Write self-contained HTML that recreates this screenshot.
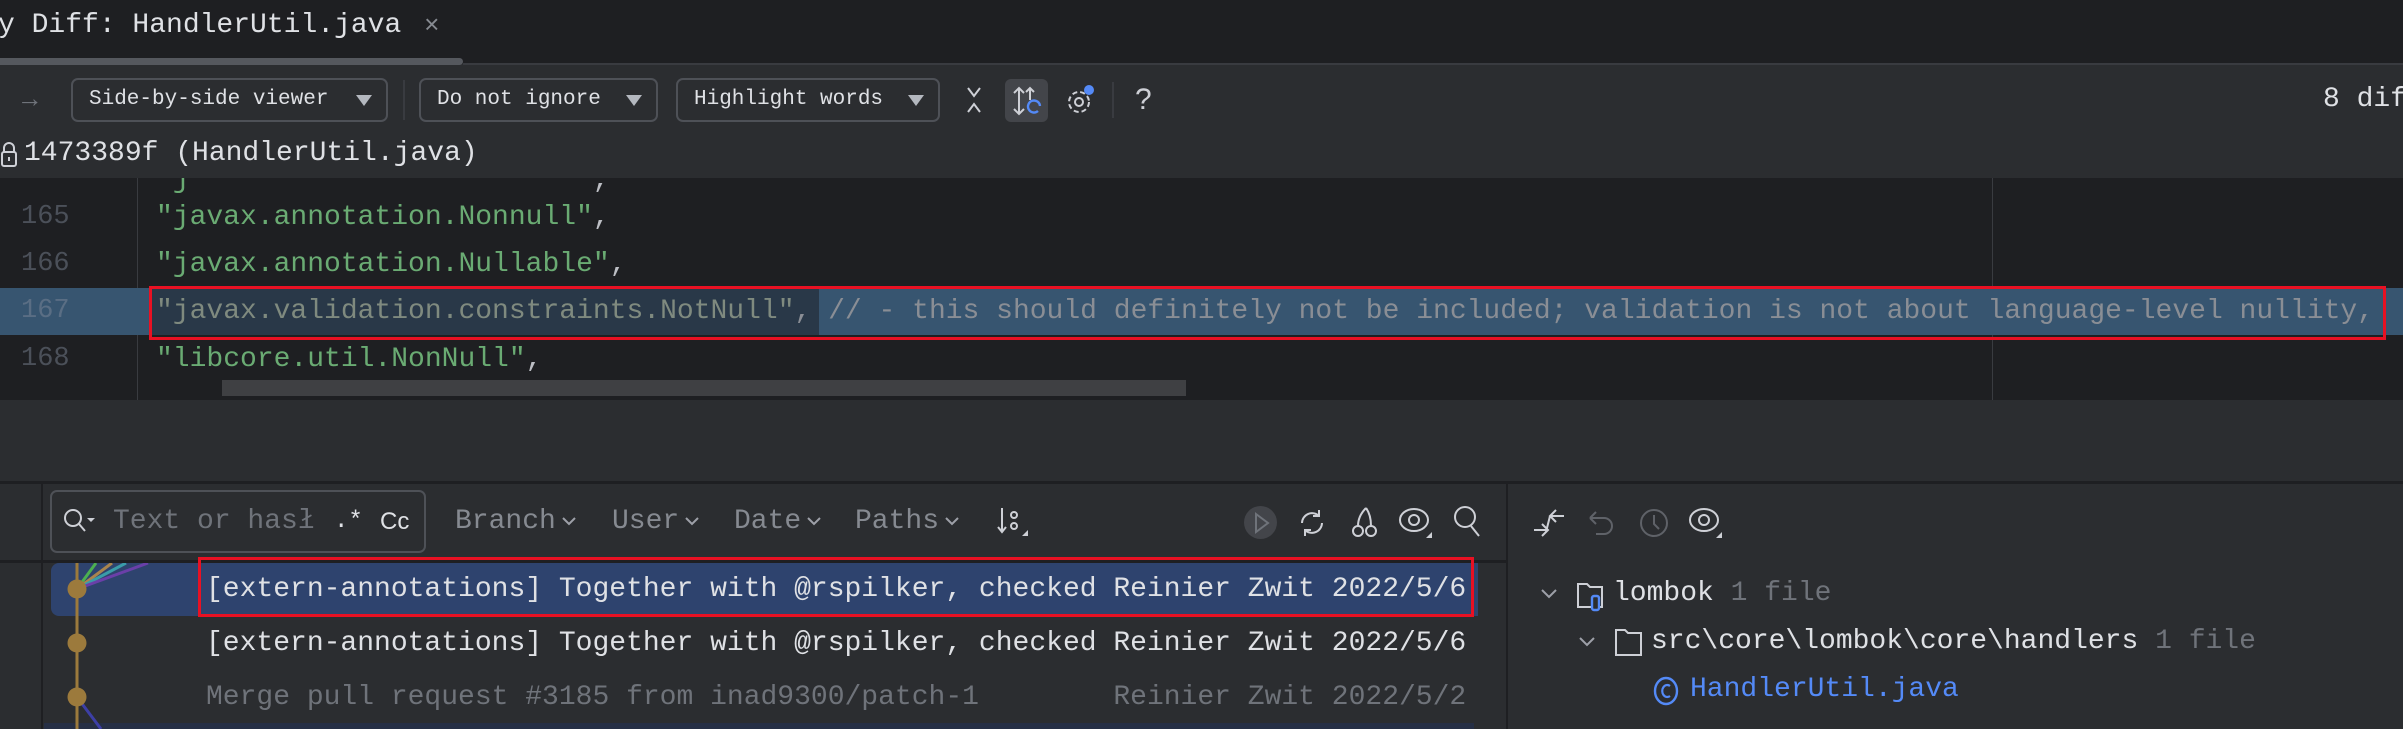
<!DOCTYPE html>
<html><head><meta charset="utf-8"><style>
*{margin:0;padding:0;box-sizing:border-box}
body{width:2403px;height:729px;overflow:hidden;background:#2b2d30;position:relative;font-family:"Liberation Mono",monospace;color:#dfe1e5}
.a{position:absolute;white-space:pre}
.dd{position:absolute;top:78px;height:44px;border:2px solid #4e5157;border-radius:7px;font-size:21px;line-height:40px;padding-left:16px;color:#dfe1e5}
.dd:after{content:"";position:absolute;right:14px;top:15px;border-left:8px solid transparent;border-right:8px solid transparent;border-top:11px solid #b4b8bf}
.code{font-size:28px;line-height:47px;color:#6aab73}
.ln{font-size:27px;color:#4b5059;line-height:47px}
.f{font-size:28px;color:#868a91;line-height:40px;top:502px}
.cv{display:inline-block;vertical-align:middle;margin-left:6px}
</style></head><body>
<!-- title bar -->
<div class="a" style="left:0;top:0;width:2403px;height:64px;background:#1e1f22"></div>
<div class="a" style="left:-2px;top:6px;font-size:28px;line-height:40px;color:#dfe1e5">y Diff: HandlerUtil.java</div>
<div class="a" style="left:424px;top:6px;font-size:26px;line-height:40px;color:#868a91">×</div>
<div class="a" style="left:0;top:58px;width:463px;height:7px;background:#55585e;border-radius:0 4px 4px 0"></div>
<div class="a" style="left:463px;top:63px;width:1940px;height:2px;background:#393b40"></div>
<!-- toolbar -->
<div class="a" style="left:22px;top:80px;font-size:26px;color:#6f737a;line-height:40px">→</div>
<div class="dd" style="left:71px;width:317px">Side-by-side viewer</div>
<div class="a" style="left:403px;top:80px;width:2px;height:40px;background:#393b40"></div>
<div class="dd" style="left:419px;width:239px">Do not ignore</div>
<div class="dd" style="left:676px;width:264px">Highlight words</div>
<svg class="a" style="left:962px;top:84px" width="24" height="32" viewBox="0 0 24 32"><path d="M6 4l6 8 6-8M6 28l6-8 6 8" stroke="#ced0d6" stroke-width="2" fill="none"/></svg>
<div class="a" style="left:1005px;top:79px;width:43px;height:43px;background:#43454a;border-radius:6px"></div>
<svg class="a" style="left:1010px;top:84px" width="34" height="34" viewBox="0 0 34 34"><path d="M9 4v26M4 9l5-5 5 5M4 25l5 5 5-5" stroke="#ced0d6" stroke-width="2" fill="none"/><path d="M20 4v12M16 8l4-4 4 4" stroke="#ced0d6" stroke-width="2" fill="none"/><path d="M30 22a6 6 0 1 0-2 5" stroke="#548af7" stroke-width="2.4" fill="none"/></svg>
<svg class="a" style="left:1065px;top:84px" width="32" height="34" viewBox="0 0 32 34"><circle cx="14" cy="18" r="10" stroke="#ced0d6" stroke-width="2" fill="none" stroke-dasharray="5 3"/><circle cx="14" cy="18" r="4" stroke="#ced0d6" stroke-width="2" fill="none"/><circle cx="24" cy="6" r="5" fill="#548af7"/></svg>
<div class="a" style="left:1112px;top:82px;width:2px;height:36px;background:#393b40"></div>
<div class="a" style="left:1135px;top:78px;font-size:30px;line-height:44px;color:#ced0d6;font-family:'Liberation Sans',sans-serif">?</div>
<div class="a" style="left:2323px;top:80px;font-size:28px;line-height:40px;color:#dfe1e5">8 dif</div>
<svg class="a" style="left:0;top:140px" width="20" height="28" viewBox="0 0 20 28"><rect x="2" y="12" width="14" height="14" rx="2" stroke="#ced0d6" stroke-width="2" fill="none"/><path d="M4 12V8a5 5 0 0 1 10 0v4M9 17v4" stroke="#ced0d6" stroke-width="2" fill="none"/></svg>
<div class="a" style="left:24px;top:134px;font-size:28px;line-height:40px;color:#dfe1e5">1473389f (HandlerUtil.java)</div>
<!-- code -->
<div class="a" style="left:0;top:178px;width:2403px;height:222px;background:#1e1f22"></div>
<div class="a" style="left:137px;top:178px;width:1px;height:222px;background:#393b40"></div>
<div class="a" style="left:1992px;top:178px;width:1px;height:222px;background:#393b40"></div>
<div class="a" style="left:0;top:288px;width:2403px;height:47px;background:#375570"></div>
<div class="a" style="left:149px;top:288px;width:670px;height:47px;background:#293848"></div>
<div class="a ln" style="left:21px;top:194px">165</div>
<div class="a ln" style="left:21px;top:241px">166</div>
<div class="a ln" style="left:21px;top:288px;color:#5a6e84">167</div>
<div class="a ln" style="left:21px;top:336px">168</div>
<div class="a code" style="left:156px;top:157px;color:#6aab73;clip-path:inset(21px 0 0 0)">"j                        <span style="color:#bcbec4">,</span></div>
<div class="a code" style="left:156px;top:194px">"javax.annotation.Nonnull"<span style="color:#bcbec4">,</span></div>
<div class="a code" style="left:156px;top:241px">"javax.annotation.Nullable"<span style="color:#bcbec4">,</span></div>
<div class="a code" style="left:156px;top:288px;color:#7f8a7f">"javax.validation.constraints.NotNull"<span style="color:#8a8e95">, // - this should definitely not be included; validation is not about language-level nullity,</span></div>
<div class="a code" style="left:156px;top:336px">"libcore.util.NonNull"<span style="color:#bcbec4">,</span></div>
<div class="a" style="left:149px;top:286px;width:2237px;height:54px;border:3px solid #e81123"></div>
<div class="a" style="left:222px;top:380px;width:964px;height:16px;background:#3f4043"></div>
<!-- bottom -->
<div class="a" style="left:0;top:481px;width:2403px;height:3px;background:#1e1f22"></div>
<div class="a" style="left:0;top:560px;width:1507px;height:3px;background:#1e1f22"></div>
<div class="a" style="left:41px;top:484px;width:2px;height:245px;background:#1e1f22"></div>
<div class="a" style="left:1506px;top:484px;width:2px;height:245px;background:#1e1f22"></div>
<div class="a" style="left:50px;top:490px;width:376px;height:63px;border:2px solid #4e5157;border-radius:7px"></div>
<svg class="a" style="left:62px;top:507px" width="36" height="30" viewBox="0 0 36 30"><circle cx="11" cy="11" r="8" stroke="#ced0d6" stroke-width="2" fill="none"/><path d="M17 17l6 7" stroke="#ced0d6" stroke-width="2"/><path d="M25 11l4 4 4-4z" fill="#ced0d6"/></svg>
<div class="a f" style="left:113px;color:#6f737a">Text or hasł</div>
<div class="a f" style="left:334px;color:#dfe1e5;font-size:24px">.*</div>
<div class="a f" style="left:380px;color:#dfe1e5;font-size:24px;font-family:'Liberation Sans',sans-serif">Cc</div>
<div class="a f" style="left:455px">Branch<svg class="cv" width="14" height="10" viewBox="0 0 14 10"><path d="M1 2l6 6 6-6" stroke="#9da0a8" stroke-width="2" fill="none"/></svg></div>
<div class="a f" style="left:612px">User<svg class="cv" width="14" height="10" viewBox="0 0 14 10"><path d="M1 2l6 6 6-6" stroke="#9da0a8" stroke-width="2" fill="none"/></svg></div>
<div class="a f" style="left:734px">Date<svg class="cv" width="14" height="10" viewBox="0 0 14 10"><path d="M1 2l6 6 6-6" stroke="#9da0a8" stroke-width="2" fill="none"/></svg></div>
<div class="a f" style="left:855px">Paths<svg class="cv" width="14" height="10" viewBox="0 0 14 10"><path d="M1 2l6 6 6-6" stroke="#9da0a8" stroke-width="2" fill="none"/></svg></div>
<svg class="a" style="left:996px;top:506px" width="36" height="32" viewBox="0 0 36 32"><path d="M6 2v24M2 21l4 5 4-5" stroke="#ced0d6" stroke-width="2" fill="none"/><circle cx="18" cy="9" r="3" stroke="#ced0d6" stroke-width="2" fill="none"/><circle cx="18" cy="20" r="3" stroke="#ced0d6" stroke-width="2" fill="none"/><path d="M26 30h6v-6z" fill="#ced0d6"/></svg>
<div class="a" style="left:1244px;top:506px;width:33px;height:33px;border-radius:50%;background:#43454a"></div>
<svg class="a" style="left:1250px;top:511px" width="22" height="24" viewBox="0 0 22 24"><path d="M6 3l12 9-12 9z" stroke="#6f737a" stroke-width="2" fill="none"/></svg>
<svg class="a" style="left:1296px;top:506px" width="32" height="34" viewBox="0 0 32 34"><path d="M6 17a10 10 0 0 1 17-7M26 17a10 10 0 0 1-17 7M23 4v6h-6M9 30v-6h6" stroke="#ced0d6" stroke-width="2" fill="none"/></svg>
<svg class="a" style="left:1350px;top:504px" width="30" height="36" viewBox="0 0 30 36"><circle cx="8" cy="27" r="5" stroke="#ced0d6" stroke-width="2" fill="none"/><circle cx="21" cy="27" r="5" stroke="#ced0d6" stroke-width="2" fill="none"/><path d="M8 22c0-8 4-14 8-18M21 22c0-8-2-14-5-18" stroke="#ced0d6" stroke-width="2" fill="none"/></svg>
<svg class="a" style="left:1398px;top:504px" width="36" height="36" viewBox="0 0 36 36"><ellipse cx="16" cy="16" rx="14" ry="11" stroke="#ced0d6" stroke-width="2" fill="none"/><circle cx="16" cy="16" r="5" stroke="#ced0d6" stroke-width="2" fill="none"/><path d="M28 34h6v-6z" fill="#ced0d6"/></svg>
<svg class="a" style="left:1452px;top:504px" width="30" height="36" viewBox="0 0 30 36"><circle cx="13" cy="13" r="10" stroke="#ced0d6" stroke-width="2" fill="none"/><path d="M19 22l8 10" stroke="#ced0d6" stroke-width="2"/></svg>
<!-- rows -->
<div class="a" style="left:51px;top:563px;width:1427px;height:53px;background:#2e436e;border-radius:8px 0 0 8px"></div>
<div class="a" style="left:44px;top:723px;width:1430px;height:6px;background:#262f45"></div>
<svg class="a" style="left:44px;top:563px" width="120" height="166" viewBox="0 0 120 166"><path d="M33 0v166" stroke="#9c7a3c" stroke-width="3"/><path d="M33 26L52 0" stroke="#4caf50" stroke-width="3"/><path d="M33 26L68 0" stroke="#a9844e" stroke-width="3"/><path d="M33 26L82 0" stroke="#3a9ca8" stroke-width="3"/><path d="M33 26L104 0" stroke="#6a3fa8" stroke-width="3"/><path d="M33 134L57 166" stroke="#3d3fa6" stroke-width="3"/><circle cx="33" cy="26" r="9.5" fill="#9c7a3c"/><circle cx="33" cy="80" r="9.5" fill="#9c7a3c"/><circle cx="33" cy="134" r="9.5" fill="#9c7a3c"/></svg>
<div class="a" style="left:206px;top:570px;font-size:28px;line-height:40px;color:#dfe1e5">[extern-annotations] Together with @rspilker, checked Reinier Zwit 2022/5/6</div>
<div class="a" style="left:206px;top:624px;font-size:28px;line-height:40px;color:#dfe1e5">[extern-annotations] Together with @rspilker, checked Reinier Zwit 2022/5/6</div>
<div class="a" style="left:206px;top:678px;font-size:28px;line-height:40px;color:#6f737a">Merge pull request #3185 from inad9300/patch-1        Reinier Zwit 2022/5/2</div>
<div class="a" style="left:198px;top:557px;width:1276px;height:60px;border:3px solid #e81123"></div>
<!-- right panel -->
<svg class="a" style="left:1532px;top:506px" width="34" height="34" viewBox="0 0 34 34"><path d="M2 24h14M10 18l6 6-6 6M32 10H18M24 4l-6 6 6 6M18 10l-4 16" stroke="#ced0d6" stroke-width="2" fill="none"/></svg>
<svg class="a" style="left:1586px;top:508px" width="30" height="30" viewBox="0 0 30 30"><path d="M4 10h14a8 8 0 0 1 0 16h-8M4 10l6-6M4 10l6 6" stroke="#5f6268" stroke-width="2" fill="none"/></svg>
<svg class="a" style="left:1638px;top:506px" width="32" height="34" viewBox="0 0 32 34"><circle cx="16" cy="17" r="13" stroke="#5f6268" stroke-width="2" fill="none"/><path d="M16 9v9l5 5" stroke="#5f6268" stroke-width="2" fill="none"/></svg>
<svg class="a" style="left:1688px;top:504px" width="36" height="36" viewBox="0 0 36 36"><ellipse cx="16" cy="16" rx="14" ry="11" stroke="#ced0d6" stroke-width="2" fill="none"/><circle cx="16" cy="16" r="5" stroke="#ced0d6" stroke-width="2" fill="none"/><path d="M28 34h6v-6z" fill="#ced0d6"/></svg>
<svg class="a" style="left:1541px;top:588px" width="16" height="12" viewBox="0 0 16 12"><path d="M1 2l7 7 7-7" stroke="#9da0a8" stroke-width="2" fill="none"/></svg>
<svg class="a" style="left:1576px;top:580px" width="34" height="34" viewBox="0 0 34 34"><path d="M2 4h9l3 3h12v20H2z" stroke="#ced0d6" stroke-width="2" fill="none"/><rect x="16" y="16" width="7" height="14" rx="2" stroke="#548af7" stroke-width="2.4" fill="#2b2d30"/></svg>
<div class="a" style="left:1613px;top:574px;font-size:28px;line-height:40px;color:#dfe1e5">lombok <span style="color:#6f737a">1 file</span></div>
<svg class="a" style="left:1579px;top:636px" width="16" height="12" viewBox="0 0 16 12"><path d="M1 2l7 7 7-7" stroke="#9da0a8" stroke-width="2" fill="none"/></svg>
<svg class="a" style="left:1614px;top:628px" width="34" height="30" viewBox="0 0 34 30"><path d="M2 2h9l3 3h13v22H2z" stroke="#ced0d6" stroke-width="2" fill="none"/></svg>
<div class="a" style="left:1651px;top:622px;font-size:28px;line-height:40px;color:#dfe1e5">src\core\lombok\core\handlers <span style="color:#6f737a">1 file</span></div>
<svg class="a" style="left:1653px;top:676px" width="28" height="30" viewBox="0 0 28 30"><ellipse cx="13" cy="15" rx="11" ry="13" stroke="#548af7" stroke-width="2.4" fill="none"/><path d="M17 10a5 6 0 1 0 0 10" stroke="#548af7" stroke-width="2.2" fill="none"/></svg>
<div class="a" style="left:1690px;top:670px;font-size:28px;line-height:40px;color:#548af7">HandlerUtil.java</div>
</body></html>
